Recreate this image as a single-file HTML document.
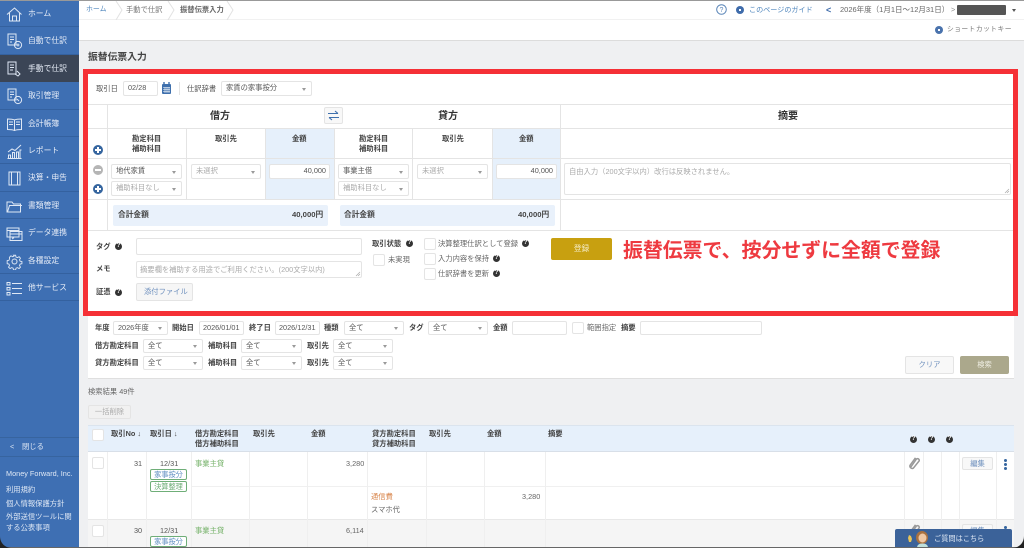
<!DOCTYPE html>
<html lang="ja"><head><meta charset="utf-8"><title>振替伝票入力</title>
<style>
*{box-sizing:border-box}
html,body{margin:0;padding:0}
body{width:1024px;height:548px;overflow:hidden;position:relative;background:#eff0f2;font-family:"Liberation Sans","Noto Sans CJK JP",sans-serif;font-size:7.3px;color:#444;filter:blur(.3px)}
.a,.t,.s,.i,.c,.b,.q,.l{position:absolute}
.t{white-space:nowrap;line-height:12px}
.bd{font-weight:700}
.s,.i{background:#fff;border:1px solid #e4e4e4;border-radius:2px;line-height:12px;padding-left:4px;white-space:nowrap;color:#555}
.s:after{content:"";position:absolute;right:5px;top:50%;margin-top:-1px;border:2.2px solid transparent;border-top:3px solid #999;border-bottom:0}
.c{width:12px;height:12px;background:#fff;border:1px solid #e4e4e4;border-radius:2px}
.q{width:7px;height:7px;border-radius:50%;background:#333;color:#fff;font-size:6px;line-height:7px;text-align:center;font-weight:700}
.l{background:#e4e4e4}
.n{position:absolute;left:0;width:79px;height:27.4px;border-bottom:1px solid #34619f}
.n span{position:absolute;left:28px;top:8px;color:#e8eef8;font-size:7.8px;line-height:12px;white-space:nowrap}
.n svg{position:absolute;left:6px;top:6px;width:17px;height:17px;fill:none;stroke:#dfe8f5;stroke-width:1}
.f{font-weight:700;color:#444}
.tag{position:absolute;width:37px;height:11px;border:1px solid #6fae78;border-radius:2px;background:#fff;text-align:center;font-size:7.2px;line-height:9px}
.v{position:absolute;top:452px;width:1px;height:96px;background:#efefef}
</style></head><body>

<!-- header -->
<div class="a" style="left:79px;top:0;width:945px;height:41px;background:#fff;border-bottom:1px solid #dcdcdc"></div>
<div class="l" style="left:79px;top:19px;width:945px;height:1px;background:#f1f1f1"></div>
<div class="t" style="left:86px;top:4px;color:#4f86bd;font-size:6.9px">ホーム</div>
<div class="t" style="left:126px;top:4px;color:#777">手動で仕訳</div>
<div class="t bd" style="left:180px;top:4px;color:#666">振替伝票入力</div>
<svg class="a" style="left:112px;top:1px" width="130" height="19" fill="none" stroke="#e2e2e2"><path d="M4 0l6 9-6 10M56 0l6 9-6 10M115 0l6 9-6 10"/></svg>
<svg class="a" style="left:716px;top:4px" width="11" height="11" fill="none" stroke="#5b86b8"><circle cx="5.500" cy="5.500" r="4.800"/><text x="5.500" y="8" font-size="7" text-anchor="middle" fill="#5b86b8" stroke="none">?</text></svg>
<div class="a" style="left:736px;top:6px;width:8px;height:8px;border-radius:50%;background:#3f6cab"></div>
<div class="a" style="left:739px;top:9px;width:2px;height:2px;background:#fff"></div>
<div class="t" style="left:749px;top:4px;color:#4f86bd;font-size:7.1px">このページのガイド</div>
<div class="t bd" style="left:826px;top:4px;color:#3f6cab;font-size:9px">&lt;</div>
<div class="t" style="left:840px;top:4px;color:#666;font-size:7.5px">2026年度（1月1日〜12月31日）</div>
<div class="t" style="left:951px;top:4px;color:#888">&gt;</div>
<div class="a" style="left:957px;top:5px;width:49px;height:10px;background:#555;border-radius:1px"></div>
<div class="a" style="left:1012px;top:9px;border:2px solid transparent;border-top:3px solid #555;border-bottom:0"></div>
<div class="a" style="left:935px;top:26px;width:8px;height:8px;border-radius:50%;background:#4a73ad"></div>
<div class="a" style="left:938px;top:29px;width:2px;height:2px;background:#fff"></div>
<div class="t" style="left:947px;top:24px;color:#777;font-size:6.8px;letter-spacing:.42px">ショートカットキー</div>

<div class="t bd" style="left:88px;top:51px;font-size:9.8px;color:#444;line-height:13px">振替伝票入力</div>

<!-- red box -->
<div class="a" style="left:83px;top:69px;width:935px;height:247px;background:#fff;border:5px solid #f53036"></div>
<div class="t" style="left:96px;top:83px;color:#555">取引日</div>
<div class="i" style="left:123px;top:81px;width:35px;height:15px">02/28</div>
<svg class="a" style="left:161px;top:82px" width="11" height="13"><rect x="1" y="2" width="9" height="10" rx="1" fill="#3f70ad"/><path d="M3 0v3M8 0v3" stroke="#3f70ad" stroke-width="1.400"/><path d="M2 5.500h7M2 7.500h7M2 9.500h7M4 5v6M6 5v6M8 5v6" stroke="#fff" stroke-width=".6"/></svg>
<div class="l" style="left:179px;top:82px;width:1px;height:13px"></div>
<div class="t" style="left:187px;top:83px;color:#555">仕訳辞書</div>
<div class="s" style="left:221px;top:81px;width:91px;height:15px">家賃の家事按分</div>

<!-- journal table lines -->
<div class="a" style="left:265px;top:129px;width:69px;height:70px;background:#e6f0fb"></div>
<div class="a" style="left:492px;top:129px;width:68px;height:70px;background:#e6f0fb"></div>
<div class="l" style="left:88px;top:104px;width:925px;height:1px"></div>
<div class="l" style="left:88px;top:128px;width:925px;height:1px"></div>
<div class="l" style="left:88px;top:158px;width:925px;height:1px"></div>
<div class="l" style="left:88px;top:199px;width:925px;height:1px"></div>
<div class="l" style="left:88px;top:230px;width:925px;height:1px"></div>
<div class="l" style="left:107px;top:104px;width:1px;height:126px"></div>
<div class="l" style="left:186px;top:128px;width:1px;height:71px"></div>
<div class="l" style="left:265px;top:128px;width:1px;height:71px"></div>
<div class="l" style="left:334px;top:128px;width:1px;height:71px"></div>
<div class="l" style="left:412px;top:128px;width:1px;height:71px"></div>
<div class="l" style="left:492px;top:128px;width:1px;height:71px"></div>
<div class="l" style="left:560px;top:104px;width:1px;height:126px"></div>

<div class="t bd" style="left:210px;top:110px;font-size:10px;line-height:13px;color:#333">借方</div>
<div class="i" style="left:324px;top:107px;width:19px;height:17px;padding:0;background:#f8f8f8"></div>
<svg class="a" style="left:327px;top:110px" width="13" height="11" fill="none" stroke="#3f70ad" stroke-width="1.100"><path d="M1 3.500h10M8 1l3 2.500M12 7.500H2M5 10L2 7.500"/></svg>
<div class="t bd" style="left:438px;top:110px;font-size:10px;line-height:13px;color:#333">貸方</div>
<div class="t bd" style="left:778px;top:110px;font-size:10px;line-height:13px;color:#333">摘要</div>

<div class="t bd" style="left:132px;top:133px">勘定科目</div>
<div class="t bd" style="left:132px;top:143px">補助科目</div>
<div class="t bd" style="left:215px;top:133px">取引先</div>
<div class="t bd" style="left:292px;top:133px">金額</div>
<div class="t bd" style="left:359px;top:133px">勘定科目</div>
<div class="t bd" style="left:359px;top:143px">補助科目</div>
<div class="t bd" style="left:442px;top:133px">取引先</div>
<div class="t bd" style="left:519px;top:133px">金額</div>

<!-- plus / minus -->
<div class="a" style="left:93px;top:145px;width:10px;height:10px;border-radius:50%;background:#35659f"></div>
<div class="a" style="left:95px;top:149px;width:6px;height:2px;background:#fff"></div><div class="a" style="left:97px;top:147px;width:2px;height:6px;background:#fff"></div>
<div class="a" style="left:93px;top:165px;width:10px;height:10px;border-radius:50%;background:#b5b5b5"></div>
<div class="a" style="left:95px;top:169px;width:6px;height:2px;background:#fff"></div>
<div class="a" style="left:93px;top:184px;width:10px;height:10px;border-radius:50%;background:#35659f"></div>
<div class="a" style="left:95px;top:188px;width:6px;height:2px;background:#fff"></div><div class="a" style="left:97px;top:186px;width:2px;height:6px;background:#fff"></div>

<div class="s" style="left:111px;top:164px;width:71px;height:15px">地代家賃</div>
<div class="s" style="left:111px;top:181px;width:71px;height:15px;color:#aaa">補助科目なし</div>
<div class="s" style="left:191px;top:164px;width:70px;height:15px;color:#aaa">未選択</div>
<div class="i" style="left:269px;top:164px;width:61px;height:15px;text-align:right;padding:0 3px 0 0">40,000</div>
<div class="s" style="left:338px;top:164px;width:71px;height:15px">事業主借</div>
<div class="s" style="left:338px;top:181px;width:71px;height:15px;color:#aaa">補助科目なし</div>
<div class="s" style="left:417px;top:164px;width:71px;height:15px;color:#aaa">未選択</div>
<div class="i" style="left:496px;top:164px;width:61px;height:15px;text-align:right;padding:0 3px 0 0">40,000</div>
<div class="i" style="left:564px;top:163px;width:447px;height:32px;color:#aaa;padding-top:2px">自由入力（200文字以内）改行は反映されません。</div>
<svg class="a" style="left:1004px;top:188px" width="6" height="6" fill="none" stroke="#aaa" stroke-width=".7"><path d="M1 5l4-4M3 5l2-2"/></svg>

<div class="a" style="left:113px;top:205px;width:215px;height:21px;background:#e9f1fb;border-radius:2px"></div>
<div class="t bd" style="left:118px;top:209px;font-size:7.7px">合計金額</div>
<div class="t bd" style="left:292px;top:209px;font-size:7.7px">40,000円</div>
<div class="a" style="left:340px;top:205px;width:215px;height:21px;background:#e9f1fb;border-radius:2px"></div>
<div class="t bd" style="left:344px;top:209px;font-size:7.7px">合計金額</div>
<div class="t bd" style="left:518px;top:209px;font-size:7.7px">40,000円</div>

<!-- lower form -->
<div class="t f" style="left:96px;top:241px">タグ</div><div class="q" style="left:115px;top:243px">?</div>
<div class="i" style="left:136px;top:238px;width:226px;height:17px"></div>
<div class="t f" style="left:96px;top:263px">メモ</div>
<div class="i" style="left:136px;top:261px;width:226px;height:17px;color:#aaa;padding-left:3px;line-height:15px">摘要欄を補助する用途でご利用ください。(200文字以内)</div>
<svg class="a" style="left:355px;top:271px" width="6" height="6" fill="none" stroke="#aaa" stroke-width=".7"><path d="M1 5l4-4M3 5l2-2"/></svg>
<div class="t f" style="left:96px;top:286px">証憑</div><div class="q" style="left:115px;top:289px">?</div>
<div class="i" style="left:136px;top:283px;width:57px;height:18px;background:#f6f6f6;color:#6d8fbd;padding-left:7px;line-height:16px">添付ファイル</div>
<div class="t f" style="left:372px;top:238px">取引状態</div><div class="q" style="left:406px;top:240px">?</div>
<div class="c" style="left:373px;top:254px"></div>
<div class="t" style="left:388px;top:254px;color:#666">未実現</div>
<div class="c" style="left:424px;top:238px"></div>
<div class="t" style="left:438px;top:238px;color:#666">決算整理仕訳として登録</div><div class="q" style="left:522px;top:240px">?</div>
<div class="c" style="left:424px;top:253px"></div>
<div class="t" style="left:438px;top:253px;color:#666">入力内容を保持</div><div class="q" style="left:493px;top:255px">?</div>
<div class="c" style="left:424px;top:268px"></div>
<div class="t" style="left:438px;top:268px;color:#666">仕訳辞書を更新</div><div class="q" style="left:493px;top:270px">?</div>
<div class="a" style="left:551px;top:238px;width:61px;height:22px;background:#c8a010;border-radius:2px;color:#f5edc8;text-align:center;line-height:22px;font-size:7.8px">登録</div>
<div class="t bd" style="left:623px;top:239px;font-size:19.9px;line-height:24px;color:#ee3a40">振替伝票で、按分せずに全額で登録</div>

<!-- filter panel -->
<div class="a" style="left:88px;top:316px;width:926px;height:63px;background:#fff;border-bottom:1px solid #dfdfdf"></div>
<div class="t f" style="left:95px;top:322px">年度</div><div class="s" style="left:113px;top:321px;width:55px;height:14px">2026年度</div>
<div class="t f" style="left:172px;top:322px">開始日</div><div class="i" style="left:199px;top:321px;width:45px;height:14px;padding-left:3px">2026/01/01</div>
<div class="t f" style="left:249px;top:322px">終了日</div><div class="i" style="left:275px;top:321px;width:45px;height:14px;padding-left:3px">2026/12/31</div>
<div class="t f" style="left:324px;top:322px">種類</div><div class="s" style="left:344px;top:321px;width:60px;height:14px">全て</div>
<div class="t f" style="left:409px;top:322px">タグ</div><div class="s" style="left:428px;top:321px;width:60px;height:14px">全て</div>
<div class="t f" style="left:493px;top:322px">金額</div><div class="i" style="left:512px;top:321px;width:55px;height:14px"></div>
<div class="c" style="left:572px;top:322px"></div>
<div class="t" style="left:587px;top:322px;color:#666">範囲指定</div>
<div class="t f" style="left:621px;top:322px">摘要</div><div class="i" style="left:640px;top:321px;width:122px;height:14px"></div>

<div class="t f" style="left:95px;top:340px">借方勘定科目</div><div class="s" style="left:143px;top:339px;width:60px;height:14px">全て</div>
<div class="t f" style="left:208px;top:340px">補助科目</div><div class="s" style="left:241px;top:339px;width:61px;height:14px">全て</div>
<div class="t f" style="left:307px;top:340px">取引先</div><div class="s" style="left:333px;top:339px;width:60px;height:14px">全て</div>
<div class="t f" style="left:95px;top:357px">貸方勘定科目</div><div class="s" style="left:143px;top:356px;width:60px;height:14px">全て</div>
<div class="t f" style="left:208px;top:357px">補助科目</div><div class="s" style="left:241px;top:356px;width:61px;height:14px">全て</div>
<div class="t f" style="left:307px;top:357px">取引先</div><div class="s" style="left:333px;top:356px;width:60px;height:14px">全て</div>
<div class="i" style="left:905px;top:356px;width:49px;height:18px;background:#f8f8f8;color:#6d8fbd;text-align:center;padding:0;line-height:16px">クリア</div>
<div class="a" style="left:960px;top:356px;width:49px;height:18px;background:#aba88c;border-radius:2px;color:#f2f1e6;text-align:center;line-height:18px">検索</div>

<!-- results -->
<div class="t" style="left:88px;top:386px;color:#666">検索結果 49件</div>
<div class="i" style="left:88px;top:405px;width:43px;height:14px;background:#f1f1f1;color:#aaa;text-align:center;padding:0">一括削除</div>

<div class="a" style="left:88px;top:425px;width:926px;height:27px;background:#e6f0fb;border-top:1px solid #dbe4ee;border-bottom:1px solid #d8dfe8"></div>
<div class="a" style="left:88px;top:452px;width:926px;height:67px;background:#fff"></div>
<div class="a" style="left:88px;top:519px;width:926px;height:29px;background:#f5f5f5;border-top:1px solid #e8e8e8"></div>
<div class="l" style="left:191px;top:486px;width:713px;height:1px;background:#f0f0f0"></div>
<div class="v" style="left:107px"></div><div class="v" style="left:146px"></div><div class="v" style="left:191px"></div>
<div class="v" style="left:249px"></div><div class="v" style="left:307px"></div><div class="v" style="left:367px"></div>
<div class="v" style="left:426px"></div><div class="v" style="left:484px"></div><div class="v" style="left:545px"></div>
<div class="v" style="left:904px"></div><div class="v" style="left:923px"></div><div class="v" style="left:941px"></div>
<div class="v" style="left:959px"></div><div class="v" style="left:996px"></div>

<div class="c" style="left:92px;top:429px"></div>
<div class="t f" style="left:111px;top:428px">取引No ↓</div>
<div class="t f" style="left:150px;top:428px">取引日 ↓</div>
<div class="t f" style="left:195px;top:428px">借方勘定科目</div>
<div class="t f" style="left:195px;top:438px">借方補助科目</div>
<div class="t f" style="left:253px;top:428px">取引先</div>
<div class="t f" style="left:311px;top:428px">金額</div>
<div class="t f" style="left:372px;top:428px">貸方勘定科目</div>
<div class="t f" style="left:372px;top:438px">貸方補助科目</div>
<div class="t f" style="left:429px;top:428px">取引先</div>
<div class="t f" style="left:487px;top:428px">金額</div>
<div class="t f" style="left:548px;top:428px">摘要</div>
<div class="q" style="left:910px;top:436px">?</div><div class="q" style="left:928px;top:436px">?</div><div class="q" style="left:946px;top:436px">?</div>

<div class="c" style="left:92px;top:457px"></div>
<div class="t" style="left:134px;top:458px;color:#555">31</div>
<div class="t" style="left:160px;top:458px;color:#555">12/31</div>
<div class="tag" style="left:150px;top:469px;color:#5b8bc0">家事按分</div>
<div class="tag" style="left:150px;top:481px;color:#6fae78">決算整理</div>
<div class="t" style="left:195px;top:458px;color:#76b26a">事業主貸</div>
<div class="t" style="left:346px;top:458px;color:#666">3,280</div>
<div class="t" style="left:371px;top:491px;color:#d9874e">通信費</div>
<div class="t" style="left:371px;top:504px;color:#666">スマホ代</div>
<div class="t" style="left:522px;top:491px;color:#666">3,280</div>
<svg class="a" style="left:908px;top:456px" width="12" height="14" fill="none" stroke="#999" stroke-width="1.500"><path d="M2.500 11.500L8.500 3a1.700 1.700 0 0 1 2.600 2L5.500 12a2.300 2.300 0 0 1-3.500-2.600L7.500 1.800"/></svg>
<div class="i" style="left:962px;top:457px;width:31px;height:13px;background:#f8f8f8;color:#6d8fbd;text-align:center;padding:0;line-height:11px">編集</div>
<div class="a" style="left:1004px;top:459px;width:3px;height:3px;border-radius:50%;background:#35659f;box-shadow:0 4px 0 #35659f,0 8px 0 #35659f"></div>

<div class="c" style="left:92px;top:525px"></div>
<div class="t" style="left:134px;top:525px;color:#555">30</div>
<div class="t" style="left:160px;top:525px;color:#555">12/31</div>
<div class="tag" style="left:150px;top:536px;color:#5b8bc0">家事按分</div>
<div class="t" style="left:195px;top:525px;color:#76b26a">事業主貸</div>
<div class="t" style="left:346px;top:525px;color:#666">6,114</div>
<svg class="a" style="left:908px;top:523px" width="12" height="14" fill="none" stroke="#999" stroke-width="1.500"><path d="M2.500 11.500L8.500 3a1.700 1.700 0 0 1 2.600 2L5.500 12a2.300 2.300 0 0 1-3.500-2.600L7.500 1.800"/></svg>
<div class="i" style="left:962px;top:524px;width:31px;height:13px;background:#f8f8f8;color:#6d8fbd;text-align:center;padding:0;line-height:11px">編集</div>
<div class="a" style="left:1004px;top:526px;width:3px;height:3px;border-radius:50%;background:#35659f;box-shadow:0 4px 0 #35659f"></div>

<!-- chat -->
<div class="a" style="left:895px;top:529px;width:117px;height:19px;background:#3b6299;border-radius:2px 2px 0 0"></div>
<svg class="a" style="left:906px;top:531px" width="24" height="17"><path d="M3 4l2 1 1 3-1 3H3L2 7z" fill="#e8c458"/><ellipse cx="16" cy="6.500" rx="6" ry="6.500" fill="#a9713f"/><ellipse cx="16.500" cy="7" rx="4" ry="4.500" fill="#f0c8a4"/><path d="M11 17c0-3 2-4.500 5.500-4.500S22 14 22 17z" fill="#bfe0dc"/></svg>
<div class="t" style="left:934px;top:533px;color:#dfe8f5;font-size:7.2px">ご質問はこちら</div>

<!-- sidebar -->
<div class="a" style="left:0;top:0;width:79px;height:548px;background:#3e6fb3"></div>
<div class="a" style="left:0;top:55px;width:79px;height:27px;background:#3b4556"></div>
<div class="n" style="top:0"><svg viewBox="0 0 17 17"><path d="M1 8.500L8.500 2l7 6.500M3.500 7v8h10V7M6.500 15v-5h4v5"/></svg><span>ホーム</span></div>
<div class="n" style="top:27.4px"><svg viewBox="0 0 17 17"><path d="M2 1h8v11H2zM4 4h4M4 6.500h4M4 9h2"/><circle cx="12" cy="12" r="3.600"/><path d="M10.500 12h3M12 10.500v3"/></svg><span>自動で仕訳</span></div>
<div class="n" style="top:54.8px;border-color:#3b4556"><svg viewBox="0 0 17 17"><path d="M2 1h8v12H2zM4 4h4M4 6.500h4M4 9h3M11 10l3 3-2 2-3-2"/></svg><span>手動で仕訳</span></div>
<div class="n" style="top:82.2px"><svg viewBox="0 0 17 17"><path d="M2 1h8v11H2zM4 4h4M4 6.500h4M4 9h2"/><circle cx="12" cy="12" r="3.600"/><path d="M11 11l2 2"/></svg><span>取引管理</span></div>
<div class="n" style="top:109.6px"><svg viewBox="0 0 17 17"><path d="M8.500 4C6.500 3 4 3 1.500 3v10.500c2.500 0 5 0 7 1 2-1 4.500-1 7-1V3c-2.500 0-5 0-7 1zM8.500 4v10.500M3 6h4M3 8.500h4M10 6h4M10 8.500h4"/></svg><span>会計帳簿</span></div>
<div class="n" style="top:137px"><svg viewBox="0 0 17 17"><path d="M1.500 15.500h14M2.500 15v-3h2v3M6.500 15V9.500h2V15M10.500 15v-6h2v6M14 15V7h1.500M2 9l4-3 3 1.500L15 2"/></svg><span>レポート</span></div>
<div class="n" style="top:164.4px"><svg viewBox="0 0 17 17"><path d="M3 2h11v13H3zM5.500 2v13M11.500 2v13"/></svg><span>決算・申告</span></div>
<div class="n" style="top:191.8px"><svg viewBox="0 0 17 17"><path d="M1 14V4h5l1.500 2h7v8zM1.500 14l2-6.500h12.500"/></svg><span>書類管理</span></div>
<div class="n" style="top:219.2px"><svg viewBox="0 0 17 17"><path d="M1 3h12v9H1zM1 5.500h12M4 6.500h12v9H4zM4 9h12M6 12l1.500 1L6 14"/></svg><span>データ連携</span></div>
<div class="n" style="top:246.6px"><svg viewBox="0 0 17 17"><circle cx="8.500" cy="8.500" r="2.500"/><path d="M7.300 1.500h2.400l.4 2 1.600.7 1.800-1.100 1.600 1.700-1.100 1.700.7 1.600 2 .4v2.400l-2 .4-.7 1.600 1.100 1.800-1.600 1.600-1.800-1.100-1.600.7-.4 2H7.300l-.4-2-1.600-.7-1.800 1.100-1.700-1.600 1.100-1.800-.6-1.600-2-.4V7.500l2-.4.6-1.600L2.800 3.800l1.700-1.700 1.800 1.100 1.600-.7z" transform="translate(.9 .9) scale(.9)"/></svg><span>各種設定</span></div>
<div class="n" style="top:274px"><svg viewBox="0 0 17 17"><path d="M1 2.500h3v2.500H1zM1 7.500h3V10H1zM1 12.500h3V15H1zM6 3.500h10M6 8.500h10M6 13.500h10"/></svg><span>他サービス</span></div>

<div class="a" style="left:0;top:437px;width:79px;height:1px;background:#37649f"></div>
<div class="a" style="left:0;top:456px;width:79px;height:1px;background:#37649f"></div>
<div class="t" style="left:10px;top:441px;color:#dfe8f5">&lt;</div>
<div class="t" style="left:22px;top:441px;color:#dfe8f5">閉じる</div>
<div class="t" style="left:6px;top:468px;color:#dfe8f5">Money Forward, Inc.</div>
<div class="t" style="left:6px;top:484px;color:#dfe8f5">利用規約</div>
<div class="t" style="left:6px;top:498px;color:#dfe8f5">個人情報保護方針</div>
<div class="t" style="left:6px;top:511px;color:#dfe8f5">外部送信ツールに関</div>
<div class="t" style="left:6px;top:522px;color:#dfe8f5">する公表事項</div>

<!-- screen frame -->
<div class="a" style="left:0;top:0;width:1024px;height:1px;background:#999"></div>
<div class="a" style="left:0;top:547px;width:1024px;height:1px;background:#666"></div>
<svg class="a" style="left:0;top:536px" width="12" height="12"><path d="M0 0C0 7 5 12 12 12H0z" fill="#222"/></svg>
<svg class="a" style="left:1012px;top:536px" width="12" height="12"><path d="M12 0C12 7 7 12 0 12H12z" fill="#222"/></svg>
</body></html>
